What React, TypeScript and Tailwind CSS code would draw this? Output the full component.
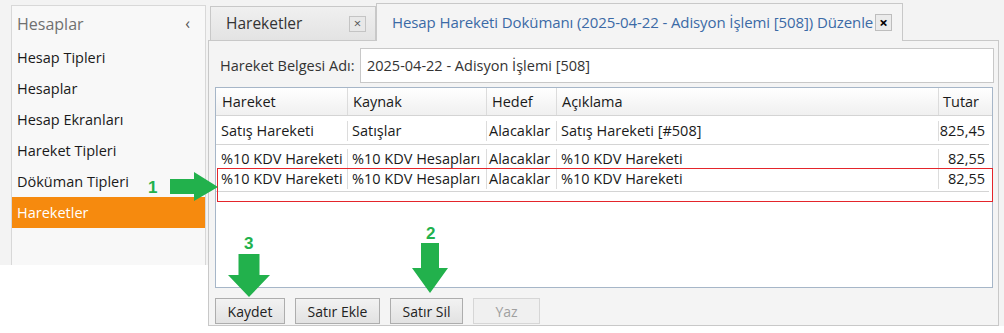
import React from "react";

const rows = [
  { h: "Satış Hareketi", k: "Satışlar", d: "Alacaklar", a: "Satış Hareketi [#508]", t: "825,45", cls: "pt-[5px] pb-[3px] border-b border-[#d4d4d4]" },
  { h: "%10 KDV Hareketi", k: "%10 KDV Hesapları", d: "Alacaklar", a: "%10 KDV Hareketi", t: "82,55", cls: "pt-[4px]" },
  { h: "%10 KDV Hareketi", k: "%10 KDV Hesapları", d: "Alacaklar", a: "%10 KDV Hareketi", t: "82,55", cls: "pb-[2px] border-b border-[#d4d4d4]" },
];

const menu = ["Hesap Tipleri", "Hesaplar", "Hesap Ekranları", "Hareket Tipleri", "Döküman Tipleri", "Hareketler"];

function DownArrow({ shaft, head, shaftH, headH }: { shaft: number; head: number; shaftH: number; headH: number }) {
  const w = head;
  const h = shaftH + headH;
  const sx = (head - shaft) / 2;
  return (
    <svg width={w} height={h} viewBox={`0 0 ${w} ${h}`}>
      <polygon
        points={`${sx},0 ${sx + shaft},0 ${sx + shaft},${shaftH} ${w},${shaftH} ${w / 2},${h} 0,${shaftH} ${sx},${shaftH}`}
        fill="#22b14c"
      />
    </svg>
  );
}

export default function App() {
  return (
    <div className="relative w-[1004px] h-[333px] overflow-hidden bg-white flex font-['Open_Sans',sans-serif] text-[14px] text-[#1a1a1a]">
      {/* Left column */}
      <div className="w-[208px] flex flex-col">
        <div className="h-[265px] bg-[#f3f3f3] pl-[11px] pt-[5px]">
          <div className="w-[195px] h-[260px] bg-[#f8f8f8] border border-b-0 border-[#d8d8d8] flex flex-col">
            <div className="h-[36px] flex items-center justify-between pl-[5px] pr-[15px]">
              <span className="text-[16px] text-[#707070]">Hesaplar</span>
              <span className="text-[16px] text-[#555] leading-none -mt-[2px]">‹</span>
            </div>
            {menu.map((m) => (
              <div
                key={m}
                className={
                  m === "Hareketler"
                    ? "h-[31px] flex items-center pl-[5px] bg-[#f68a0e] text-white text-[14.5px]"
                    : "h-[31px] flex items-center pl-[5px] text-[14.5px]"
                }
              >
                {m}
              </div>
            ))}
          </div>
        </div>
      </div>

      {/* Right column */}
      <div className="w-[796px] h-[326px] bg-[#f3f3f3] flex flex-col">
        <div className="h-[40px] flex items-end pl-[2px]">
          <div className="w-[166px] h-[34px] border border-b-0 border-[#c8c8c8] bg-gradient-to-b from-[#f0f0f0] to-[#e3e3e3] flex items-center justify-between pl-[15px] pr-[9px]">
            <span className="text-[15.5px] text-[#333]">Hareketler</span>
            <span className="w-[17px] h-[16px] border border-[#c4c4c4] bg-[#e8e8e8] flex items-center justify-center text-[13px] text-[#555] leading-none">×</span>
          </div>
          <div className="relative z-10 -mb-px w-[527px] h-[38px] border border-b-0 border-[#c8c8c8] bg-[#f4f4f4] flex items-center justify-between pl-[15px] pr-[10px]">
            <span className="text-[15px] text-[#3b6aa6] whitespace-nowrap tracking-[-0.1px]">Hesap Hareketi Dokümanı (2025-04-22 - Adisyon İşlemi [508]) Düzenle</span>
            <span className="w-[17px] h-[17px] border border-[#bdbdbd] bg-[#ebebeb] flex items-center justify-center text-[15px] font-bold text-black leading-none">×</span>
          </div>
        </div>
        <div className="w-[791px] flex-1 border border-[#c8c8c8] bg-[#f4f4f4] flex flex-col pl-[6px] pr-[4px] pt-[7px]">
          <div className="flex items-center h-[35px]">
            <span className="ml-[5px] w-[135px] text-[14.5px] text-[#333] whitespace-nowrap">Hareket Belgesi Adı:</span>
            <div className="ml-[5px] flex-1 h-[35px] bg-white border border-[#c8c8c8] flex items-center pl-[6px] text-[14.5px] text-[#333]">
              2025-04-22 - Adisyon İşlemi [508]
            </div>
          </div>
          <div className="mt-[4px] w-[778px] h-[201px] bg-white border border-[#a6b6c8] flex flex-col text-[14.5px]">
            <div className="flex bg-gradient-to-b from-white to-[#f0f0f0] border-b border-[#d4d4d4] h-[28px] leading-[20px]">
              <div className="w-[132px] pl-[6px] pt-[4px] border-r border-[#dcdcdc]">Hareket</div>
              <div className="w-[139px] pl-[5px] pt-[4px] border-r border-[#dcdcdc]">Kaynak</div>
              <div className="w-[70px] pl-[5px] pt-[4px] border-r border-[#dcdcdc]">Hedef</div>
              <div className="w-[382px] pl-[5px] pt-[4px] border-r border-[#dcdcdc]">Açıklama</div>
              <div className="flex-1 pl-[4px] pt-[4px]">Tutar</div>
            </div>
            {rows.map((r, i) => (
              <div key={i} className={`flex leading-[20px] mr-[3px] ${r.cls}`}>
                <div className="w-[132px] pl-[5px] border-r border-[#dcdcdc] whitespace-nowrap overflow-hidden">{r.h}</div>
                <div className="w-[139px] pl-[4px] border-r border-[#dcdcdc] whitespace-nowrap overflow-hidden">{r.k}</div>
                <div className="w-[70px] pl-[2px] border-r border-[#dcdcdc] whitespace-nowrap overflow-hidden">{r.d}</div>
                <div className="w-[382px] pl-[4px] border-r border-[#dcdcdc] whitespace-nowrap overflow-hidden">{r.a}</div>
                <div className="flex-1 text-right pr-[4px]">{r.t}</div>
              </div>
            ))}
          </div>
          <div className="mt-[10px] flex gap-[10px]">
            <button className="w-[70px] h-[26px] border border-[#adadad] bg-gradient-to-b from-[#f2f2f2] to-[#e2e2e2] text-[14px] text-[#222]">Kaydet</button>
            <button className="w-[85px] h-[26px] border border-[#adadad] bg-gradient-to-b from-[#f2f2f2] to-[#e2e2e2] text-[14px] text-[#222]">Satır Ekle</button>
            <button className="w-[73px] h-[26px] border border-[#adadad] bg-gradient-to-b from-[#f2f2f2] to-[#e2e2e2] text-[14px] text-[#222]">Satır Sil</button>
            <button className="w-[67px] h-[26px] border border-[#d6d6d6] bg-[#f0f0f0] text-[14px] text-[#a0a0a0]">Yaz</button>
          </div>
        </div>
      </div>

      {/* Red highlight */}
      <div className="absolute left-[217px] top-[168px] w-[776px] h-[34px] border border-[#e4252b]" />

      {/* Annotation 1 */}
      <div className="absolute left-[148px] top-[179px] text-[17px] font-bold text-[#22b14c] font-['Liberation_Sans',sans-serif] leading-none">1</div>
      <svg className="absolute left-[170px] top-[172px]" width="48" height="30" viewBox="0 0 48 30">
        <polygon points="0,7 24,7 24,0 48,15 24,29 24,22 0,22" fill="#22b14c" />
      </svg>

      {/* Annotation 3 */}
      <div className="absolute left-[244px] top-[235px] text-[17px] font-bold text-[#22b14c] font-['Liberation_Sans',sans-serif] leading-none">3</div>
      <div className="absolute left-[228px] top-[254px]">
        <DownArrow shaft={21} head={42} shaftH={21} headH={22} />
      </div>

      {/* Annotation 2 */}
      <div className="absolute left-[426px] top-[225px] text-[17px] font-bold text-[#22b14c] font-['Liberation_Sans',sans-serif] leading-none">2</div>
      <div className="absolute left-[412px] top-[243px]">
        <DownArrow shaft={18} head={36} shaftH={25} headH={25} />
      </div>
    </div>
  );
}
